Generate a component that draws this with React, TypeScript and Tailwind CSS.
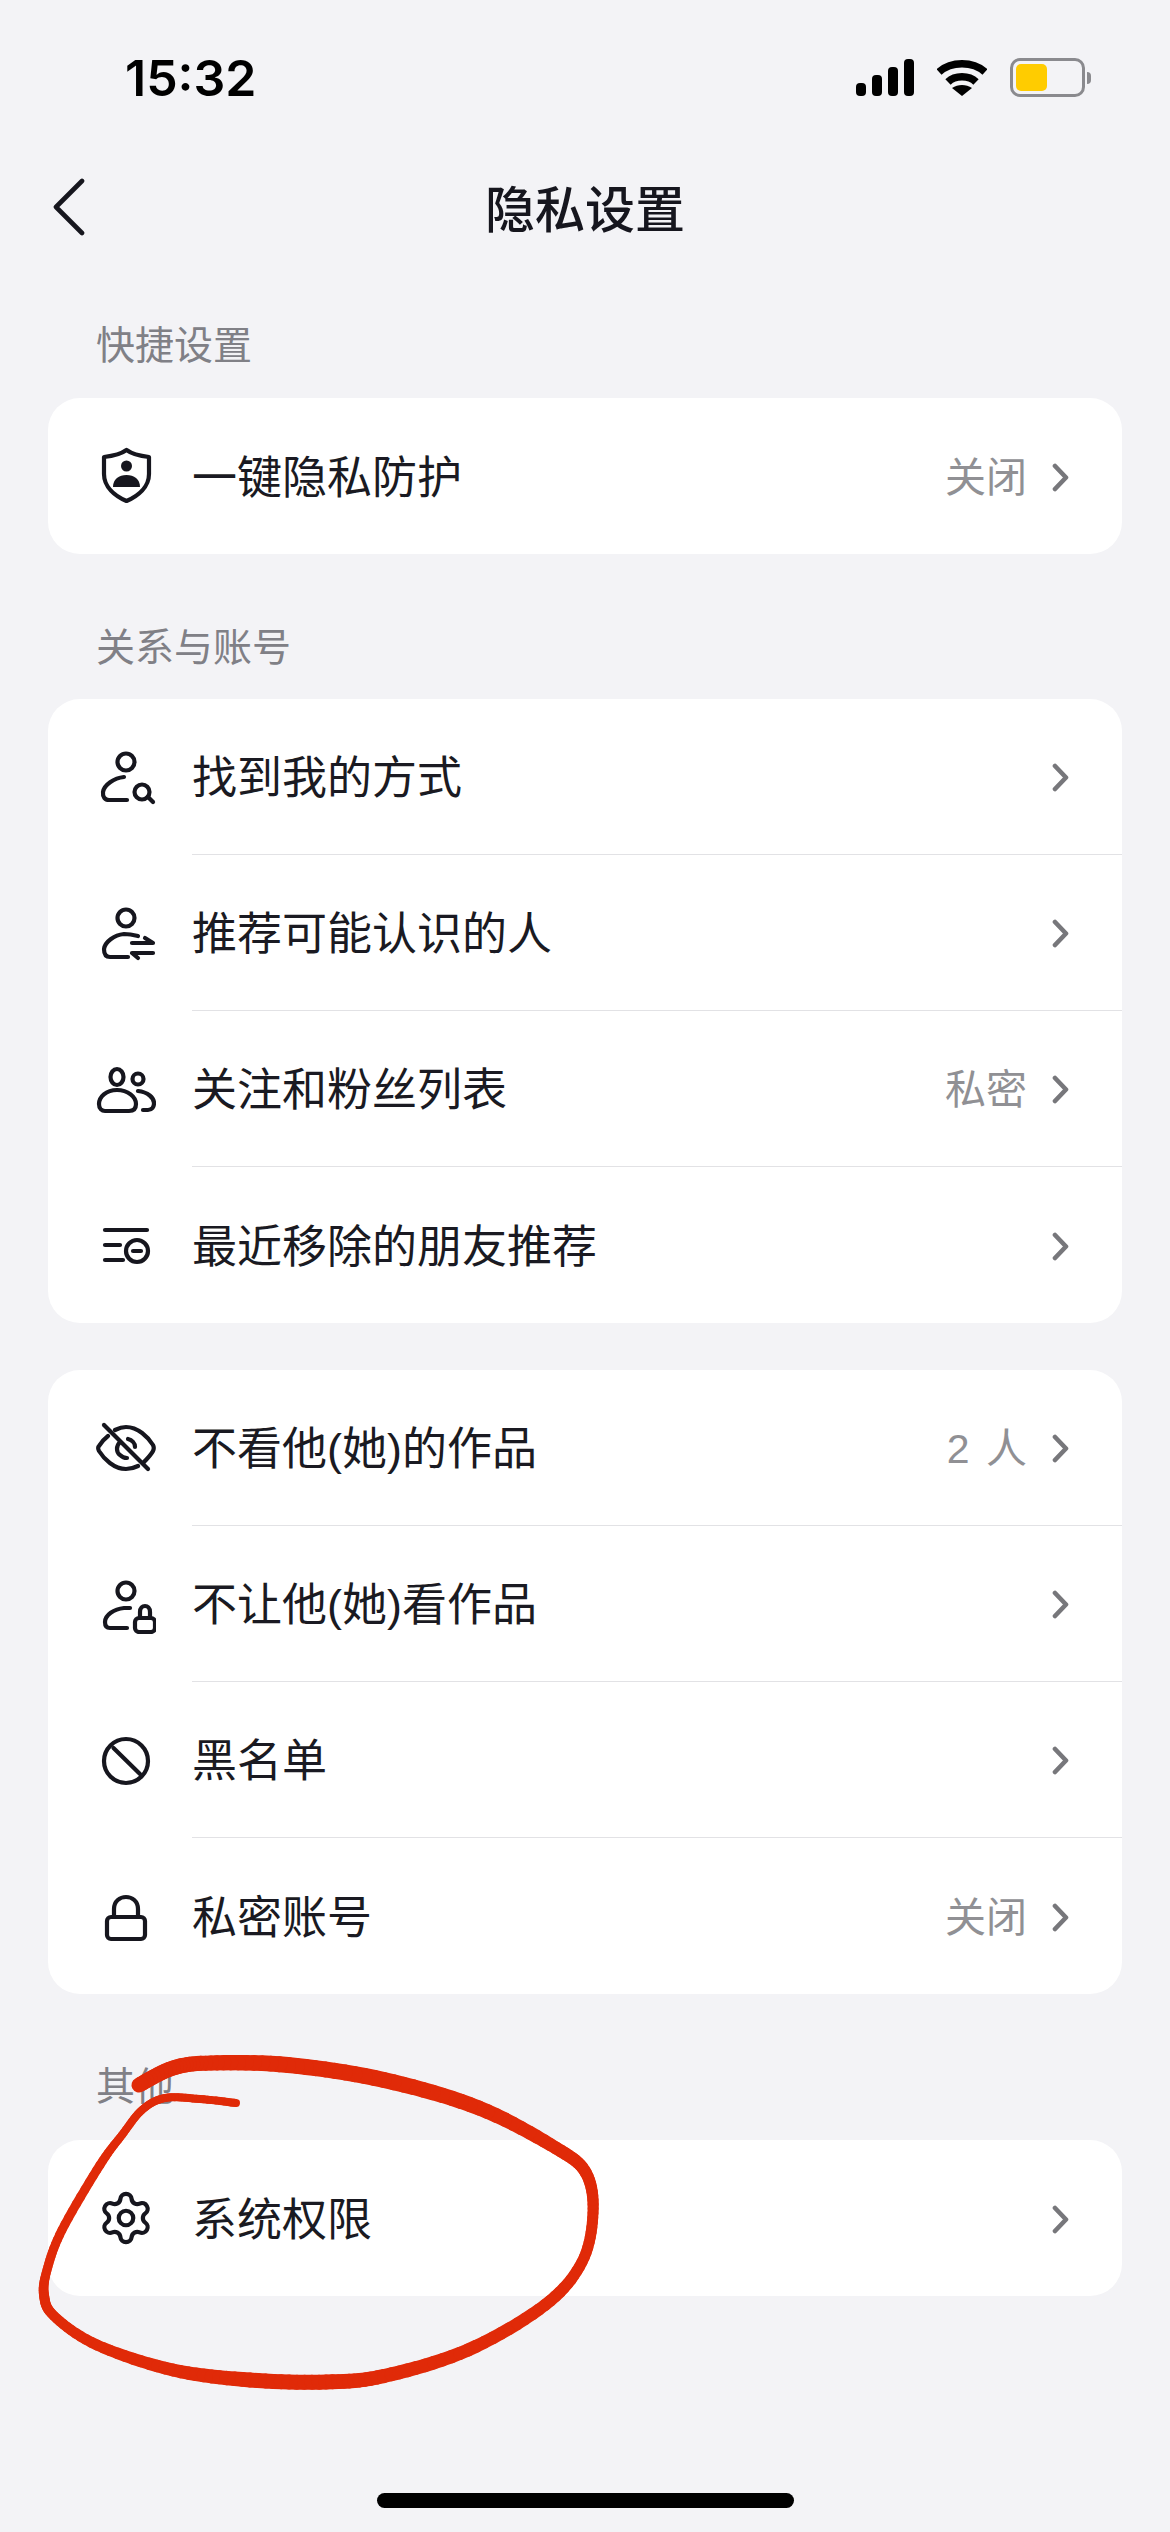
import { Settings } from "lucide-react";
import type { ReactNode } from "react";

const ink = "#16161e";

function Svg({ children }: { children: ReactNode }) {
  return (
    <svg width="60" height="60" viewBox="0 0 60 60" fill="none" stroke={ink} strokeWidth="4.2" strokeLinecap="round" strokeLinejoin="round">
      {children}
    </svg>
  );
}

const ShieldIcon = () => (
  <Svg>
    <path d="M30.500 4 C36 8 44 10 53 11 V28 C53 41 42 50 30.500 55 C19 50 8 41 8 28 V11 C17 10 25 8 30.500 4 Z" />
    <circle cx="30.500" cy="20" r="5.500" fill={ink} stroke="none" />
    <path d="M17 41 C17 33 23 29 30.500 29 C38 29 44 33 44 41 Z" fill={ink} stroke="none" />
  </Svg>
);
const SearchUserIcon = () => (
  <Svg>
    <circle cx="30" cy="15" r="8.500" />
    <path d="M28 30 C18 31 8 38 7 45 C6.500 50 9 53 13 53 H31" />
    <circle cx="46" cy="45" r="7.500" />
    <path d="M52 50 L57 55" />
  </Svg>
);
const SwapUserIcon = () => (
  <Svg>
    <circle cx="30" cy="15" r="8.500" />
    <path d="M42 33 C38 32 32 31 28 31 C18 32 9 39 8 46 C8 51 10 54 14 54 H32" />
    <path d="M36 40 H57 L49 35" />
    <path d="M57 50 H36 L42 55" />
  </Svg>
);
const FollowersIcon = () => (
  <Svg>
    <ellipse cx="21" cy="18" rx="6.500" ry="8" />
    <circle cx="42" cy="20" r="5.500" />
    <path d="M21 31 C10 31 3 38 3 45 C3 50 6 52 9 52 H33 C37 52 40 50 40 45 C40 38 32 31 21 31 Z" />
    <path d="M42 32 C52 33 58 39 58 44 C58 48 56 51 52 51 H47" />
  </Svg>
);
const RemovedIcon = () => (
  <Svg>
    <path d="M9 15 H51" />
    <path d="M9 30 H24" />
    <path d="M9 45 H27" />
    <circle cx="41" cy="36" r="11" />
    <path d="M37 36 H45" />
  </Svg>
);
const EyeOffIcon = () => (
  <Svg>
    <path d="M19 12 C23 10 26 9 30 9 C42 9 52 19 57 27 C58 29 58 31 57 33 C55 37 51 41 47 45" />
    <path d="M12 18 C8 21 5 25 3 28 C2 29 2 31 3 33 C8 41 18 51 30 51 C34 51 38 50 42 48" />
    <path d="M24 24 C20 28 20 34 24 37 C26 39 29 40 31 40" />
    <path d="M32 21 C36 22 39 25 39 29" />
    <path d="M8 7 L52 51" />
  </Svg>
);
const LockUserIcon = () => (
  <Svg>
    <circle cx="30" cy="17" r="8.500" />
    <path d="M34 34 H28 C18 35 9 41 9 48 C9 52 11 54 14 54 H31" />
    <rect x="39" y="44" width="20" height="14" rx="4" />
    <path d="M44 44 V38 C44 30 54 30 54 38 V44" />
  </Svg>
);
const BlockIcon = () => (
  <Svg>
    <circle cx="30" cy="31" r="22" />
    <path d="M17.500 18 L44 44" />
  </Svg>
);
const LockIcon = () => (
  <Svg>
    <rect x="11" y="31" width="38" height="22" rx="4" />
    <path d="M18 31 V23 C18 7 42 7 42 23 V31" />
  </Svg>
);
const GearIcon = () => (
  <div className="flex h-[60px] w-[60px] items-center justify-center">
    <Settings color={ink} size={58} strokeWidth={1.75} />
  </div>
);

const RowChevron = () => (
  <svg className="ml-[25px] mr-[53px] -mt-[2px] shrink-0" width="17" height="29" viewBox="0 0 17 29" fill="none" stroke="#77777b" strokeWidth="4.600" strokeLinecap="round" strokeLinejoin="round">
    <path d="M3 3 L14 14.500 L3 26" />
  </svg>
);

type RowData = { icon: ReactNode; label: string; value?: string };

function Card({ rows }: { rows: RowData[] }) {
  return (
    <div className="mx-12 rounded-[32px] bg-white">
      {rows.map((row, i) => (
        <div key={row.label} className="flex h-[156px] items-stretch">
          <div className="flex w-[144px] shrink-0 items-center pl-[48px]">{row.icon}</div>
          <div className={`flex min-w-0 flex-1 items-center pt-[4px] ${i < rows.length - 1 ? "border-b border-[#e2e2e5]" : ""}`}>
            <span className="flex-1 text-[45px] leading-none text-[#1a1a22]">{row.label}</span>
            {row.value && <span className="text-[41px] leading-none text-[#909094] [word-spacing:5px]">{row.value}</span>}
            <RowChevron />
          </div>
        </div>
      ))}
    </div>
  );
}

function SectionTitle({ children, className }: { children: ReactNode; className: string }) {
  return <div className={`ml-[96px] text-[39px] leading-none text-[#808086] ${className}`}>{children}</div>;
}

// hand drawn marker stroke: centre line points with the pen width at each point
const marker: [number, number, number][] = [
  [236, 2103, 8], [200, 2099, 8], [165, 2098, 8], [142, 2110, 8], [122, 2135, 8], [100, 2165, 9],
  [62, 2230, 9], [47, 2270, 9], [44, 2295, 10], [54, 2316, 10], [97, 2345, 11], [173, 2370, 13],
  [250, 2380, 15], [326, 2382, 15], [384, 2376, 14], [468, 2350, 13], [545, 2305, 12], [582, 2262, 11],
  [593, 2213, 11], [586, 2173, 12], [556, 2148, 13], [479, 2108, 15], [384, 2080, 16], [288, 2065, 16],
  [211, 2063, 15], [173, 2068, 15], [139, 2085, 15],
];

function markerSegments() {
  const segs: { x1: number; y1: number; x2: number; y2: number; w: number }[] = [];
  const at = (i: number) => marker[Math.max(0, Math.min(marker.length - 1, i))];
  const spline = (a: number, b: number, c: number, d: number, t: number) =>
    0.5 * (2 * b + (c - a) * t + (2 * a - 5 * b + 4 * c - d) * t * t + (3 * b - a - 3 * c + d) * t * t * t);
  for (let i = 0; i < marker.length - 1; i++) {
    const [p0, p1, p2, p3] = [at(i - 1), at(i), at(i + 1), at(i + 2)];
    for (let s = 0; s < 10; s++) {
      const t0 = s / 10;
      const t1 = (s + 1) / 10;
      segs.push({
        x1: spline(p0[0], p1[0], p2[0], p3[0], t0),
        y1: spline(p0[1], p1[1], p2[1], p3[1], t0),
        x2: spline(p0[0], p1[0], p2[0], p3[0], t1),
        y2: spline(p0[1], p1[1], p2[1], p3[1], t1),
        w: p1[2] + (p2[2] - p1[2]) * t0,
      });
    }
  }
  return segs;
}

export default function App() {
  return (
    <div className="relative h-[2532px] w-[1170px] overflow-hidden bg-[#f3f3f6] font-['Liberation_Sans','Noto_Sans_CJK_SC',sans-serif]">
      {/* status bar */}
      <div className="flex h-[155px] items-start justify-between pl-[125px] pr-[79px] pt-[50px]">
        <span className="font-['Inter',sans-serif] text-[50px] font-semibold leading-[56px] text-black">15:32</span>
        <div className="flex items-center gap-[23px] pt-[8px]">
          <svg width="58" height="38" viewBox="0 0 58 38" fill="#000">
            <rect x="0" y="24" width="10" height="13" rx="4" />
            <rect x="16" y="16" width="10" height="21" rx="4" />
            <rect x="32" y="8" width="10" height="29" rx="4" />
            <rect x="48" y="0" width="10" height="37" rx="4" />
          </svg>
          <svg width="50" height="38" viewBox="0 0 50 38" fill="none" stroke="#000" strokeWidth="7.500">
            <path d="M2 13 C14 2 36 2 48 13" />
            <path d="M11 23 C18 16 32 16 39 23" />
            <path d="M25 37 L15 29 C21 25 29 25 35 29 Z" fill="#000" stroke="none" />
          </svg>
          <div className="flex items-center">
            <div className="h-[39px] w-[75px] rounded-[10px] border-[3px] border-[#8a8a8e] p-[3px]">
              <div className="h-full w-[31px] rounded-[5px] bg-[#ffcc00]" />
            </div>
            <div className="ml-[2px] h-[12px] w-[4px] rounded-r-full bg-[#8a8a8e]" />
          </div>
        </div>
      </div>

      {/* nav bar */}
      <div className="relative flex h-[108px] items-center justify-center pt-[3px]">
        <svg className="absolute left-[52px] top-[23px]" width="34" height="58" viewBox="0 0 34 58" fill="none" stroke={ink} strokeWidth="4.600" strokeLinecap="round" strokeLinejoin="round">
          <path d="M30 3 L4 29 L30 55" />
        </svg>
        <span className="text-[50px] font-medium leading-none text-[#16161e]">隐私设置</span>
      </div>

      <SectionTitle className="mt-[63px] mb-[33px]">快捷设置</SectionTitle>
      <Card rows={[{ icon: <ShieldIcon />, label: "一键隐私防护", value: "关闭" }]} />

      <SectionTitle className="mt-[74px] mb-[32px]">关系与账号</SectionTitle>
      <Card
        rows={[
          { icon: <SearchUserIcon />, label: "找到我的方式" },
          { icon: <SwapUserIcon />, label: "推荐可能认识的人" },
          { icon: <FollowersIcon />, label: "关注和粉丝列表", value: "私密" },
          { icon: <RemovedIcon />, label: "最近移除的朋友推荐" },
        ]}
      />

      <div className="h-[47px]" />
      <Card
        rows={[
          { icon: <EyeOffIcon />, label: "不看他(她)的作品", value: "2 人" },
          { icon: <LockUserIcon />, label: "不让他(她)看作品" },
          { icon: <BlockIcon />, label: "黑名单" },
          { icon: <LockIcon />, label: "私密账号", value: "关闭" },
        ]}
      />

      <SectionTitle className="mt-[73px] mb-[34px]">其他</SectionTitle>
      <Card rows={[{ icon: <GearIcon />, label: "系统权限" }]} />

      {/* red marker circle drawn over the screenshot */}
      <svg className="absolute left-0 top-0" width="1170" height="2532" viewBox="0 0 1170 2532" fill="none" stroke="#e02a08" strokeLinecap="round">
        {markerSegments().map((s, i) => (
          <line key={i} x1={s.x1} y1={s.y1} x2={s.x2} y2={s.y2} strokeWidth={s.w} />
        ))}
      </svg>

      {/* home indicator */}
      <div className="absolute bottom-[24px] left-[377px] h-[15px] w-[417px] rounded-[8px] bg-black" />
    </div>
  );
}
